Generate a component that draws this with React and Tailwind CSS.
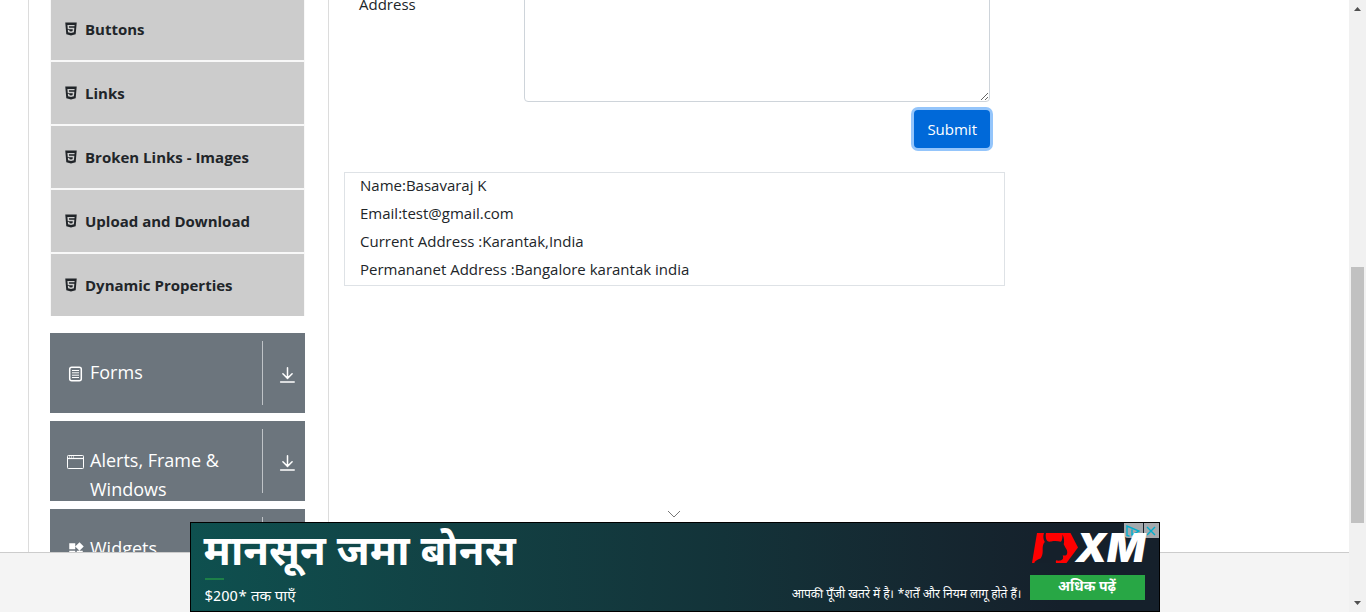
import { AiFillHtml5 } from "react-icons/ai";
import { MdWidgets } from "react-icons/md";

const links = [
  "Buttons",
  "Links",
  "Broken Links - Images",
  "Upload and Download",
  "Dynamic Properties",
];

const results = [
  "Name:Basavaraj K",
  "Email:test@gmail.com",
  "Current Address :Karantak,India",
  "Permananet Address :Bangalore karantak india",
];

function FormsIcon() {
  return (
    <svg viewBox="0 0 18 18" className="size-[18px]" fill="none" stroke="currentColor" aria-hidden="true">
      <rect x="2.700" y="2.200" width="11.600" height="13.600" rx="2" strokeWidth="1.5" />
      <path d="M5 5.500h7M5 7.800h7M5 10.200h7M5 12.500h7" strokeWidth="1" />
    </svg>
  );
}

function WindowIcon() {
  return (
    <svg viewBox="0 0 18 18" className="size-[18px]" fill="none" stroke="currentColor" aria-hidden="true">
      <rect x="0.500" y="2.500" width="16" height="13" rx="0.800" strokeWidth="1" />
      <path d="M.5 5.500h16" strokeWidth="1.2" />
      <path d="M2 4h1M4 4h1M6 4h1" strokeWidth="1" />
    </svg>
  );
}

function DownloadIcon() {
  return (
    <svg viewBox="0 0 16 16" className="size-4" fill="none" stroke="currentColor" strokeWidth="1.5" strokeLinecap="round" aria-hidden="true">
      <path d="M8.500.8v10.600M3.900 6.800l4.600 4.600 4.600-4.600M1.600 15h13.600" />
    </svg>
  );
}

const groups = [
  { name: "Forms", Icon: FormsIcon },
  { name: "Alerts, Frame & Windows", Icon: WindowIcon },
  { name: "Widgets", Icon: MdWidgets },
];

function Sidebar() {
  return (
    <nav className="w-[301px] shrink-0 border-x border-[#dcdcdc] pl-[21px] pr-[23px]">
      <ul className="-mt-0.5 flex flex-col gap-0.5 border-x border-[#f8f8f8] bg-[#f8f8f8]">
        {links.map((name) => (
          <li key={name}>
            <a href="#" className="flex h-[62px] items-center gap-1.5 bg-[#ccc] pl-3 text-[15px] font-bold text-[#212529]">
              <AiFillHtml5 className="size-4" />
              {name}
            </a>
          </li>
        ))}
      </ul>
      <div className="mt-[17px] flex flex-col gap-2">
        {groups.map(({ name, Icon }) => (
          <button key={name} type="button" className="flex h-20 items-start overflow-hidden bg-[#6c757d] text-left text-lg leading-[29px] text-white">
            <span className="flex flex-1 gap-[5px] px-[17px] pt-[25px]">
              <span className="flex h-8 w-[18px] shrink-0 items-center">
                <Icon className="size-[18px]" />
              </span>
              <span className="min-w-0">{name}</span>
            </span>
            <span className="mt-2 flex h-16 w-[43px] items-center justify-center border-l border-[#bfc3c7] pl-1.5 pt-1">
              <DownloadIcon />
            </span>
          </button>
        ))}
      </div>
    </nav>
  );
}

function TextBoxForm() {
  return (
    <main className="w-full max-w-[691px] px-[15px] text-[15px] leading-6">
      <form className="px-[15px]" onSubmit={(e) => e.preventDefault()}>
        <div className="-mt-2 flex">
          <label htmlFor="permanentAddress" className="w-[165px] shrink-0">
            Address
          </label>
          <textarea
            id="permanentAddress"
            className="h-[110px] min-w-0 flex-1 resize rounded border border-[#ced4da] bg-white px-3 py-1.5 outline-none"
          />
        </div>
        <div className="mt-2 flex justify-end">
          <button
            type="submit"
            className="h-[38px] rounded bg-[#0069d9] px-[13px] text-white ring-3 ring-[#94c5fb]"
          >
            Submit
          </button>
        </div>
      </form>
      <div className="mt-6 border border-[#dee2e6] px-[15px]">
        {results.map((line) => (
          <p key={line} className="mb-1">
            {line}
          </p>
        ))}
      </div>
    </main>
  );
}

function XmLogo() {
  return (
    <div className="flex items-center pl-0.5 text-white">
      <svg viewBox="0 0 46 30" className="h-[30px] w-[46px] shrink-0" aria-hidden="true">
        <path fill="#f00" d="M5 0h33.500L46 14.500 34.500 30H0Z" />
        <path
          fill="#15202b"
          d="M12 0C11 3 11 6 12.800 9c-1.800 2-2.300 4.500-2.100 8 .1 4-.7 6.500-2.200 8.500-2 .8-4 1.500-6 3.500v1.500h22c-.8-1-1-2.300-.2-3.300 1.700.8 4.500.6 6-.7 1-1 1-2.500.4-4.200 2 .6 3.800.2 4.300-1.300.6-2 .2-4-1.500-6.200l-1.800-3.500c.7-3 .5-7-1.300-9.800.2 3.300-.2 5.800-1.500 7.300-3.300-.8-6.500-1-9.700-.3-2.700.5-4.500-.3-5.100-2.700-.5-2-.5-4-.1-5.800Z"
        />
      </svg>
      <span className="-ml-0.5 font-['Inter',sans-serif] text-[40px] font-black italic leading-[30px]">XM</span>
    </div>
  );
}

function AdBanner() {
  return (
    <aside className="absolute bottom-0 left-1/2 w-[970px] -translate-x-1/2">
      <button type="button" aria-label="Collapse" className="mx-auto flex h-4 w-8 items-center justify-center pr-0.5 text-[#777]">
        <svg viewBox="0 0 14 8" className="h-2 w-3.5" fill="none" stroke="currentColor" aria-hidden="true">
          <path d="m1 1 6 6 6-6" />
        </svg>
      </button>
      <div className="relative flex h-[90px] justify-between border border-black bg-linear-to-r from-[#0e504f] via-[#133339] via-55% to-[#15202b] to-90% pl-[13px] pr-3.5 font-['Noto_Sans_Devanagari','Noto_Sans',sans-serif] text-white">
        <div className="absolute right-0 top-0 flex gap-px">
          <span className="flex h-[15px] w-[19px] items-center justify-center rounded-bl bg-[#a5a9ad]">
            <svg viewBox="0 0 14 12" className="h-3 w-3.5" fill="none" stroke="#00aecd" strokeWidth="1.4" aria-hidden="true">
              <path d="M3.500 11.200 1 10.500V1l12 5-7 3.800V4.500" />
            </svg>
          </span>
          <button type="button" aria-label="Close ad" className="flex h-[15px] w-[15px] items-center justify-center bg-[#a5a9ad]">
            <svg viewBox="0 0 10 10" className="size-2.5" stroke="#00aecd" strokeWidth="1.4" aria-hidden="true">
              <path d="m1 1 8 8M9 1 1 9" />
            </svg>
          </button>
        </div>
        <div>
          <p className="h-[55px] pt-2 text-[42px] font-bold leading-[48px]">मानसून जमा बोनस</p>
          <div className="ml-px h-0.5 w-[19px] bg-[#1d8048]" />
          <p className="pl-px pt-1 text-[15px] leading-7">$200* तक पाएँ</p>
        </div>
        <div className="relative flex items-end gap-2">
          <p className="pb-1 text-xs leading-6">आपकी पूँजी खतरे में है। *शर्तें और नियम लागू होते हैं।</p>
          <div className="flex w-[115px] flex-col gap-3 pb-[11px]">
            <XmLogo />
            <a href="#" className="flex h-[25px] items-center justify-center bg-[#28a745] text-sm font-bold">
              अधिक पढ़ें
            </a>
          </div>
        </div>
      </div>
    </aside>
  );
}

function ScrollTrack() {
  return (
    <div className="flex w-[17px] shrink-0 flex-col items-center justify-between bg-[#f1f1f1] py-[7px]" aria-hidden="true">
      <svg viewBox="0 0 7 4" className="h-1 w-[7px]" fill="#505050">
        <path d="M0 4 3.500 0 7 4Z" />
      </svg>
      <div className="flex w-[13px] flex-1 flex-col">
        <div className="grow-[256]" />
        <div className="grow-[256] bg-[#c1c1c1]" />
        <div className="grow-[78]" />
      </div>
      <svg viewBox="0 0 7 4" className="h-1 w-[7px]" fill="#505050">
        <path d="m0 0 3.500 4L7 0Z" />
      </svg>
    </div>
  );
}

export default function App() {
  return (
    <div className="flex h-screen overflow-hidden bg-white font-['Segoe_UI','Open_Sans',sans-serif] text-base text-[#212529]">
      <div className="relative flex min-w-0 flex-1 flex-col">
        <div className="flex min-h-0 flex-1 overflow-hidden pl-7">
          <Sidebar />
          <TextBoxForm />
        </div>
        <footer className="h-15 shrink-0 border-t border-[#ccc] bg-[#f4f4f4]" />
        <AdBanner />
      </div>
      <ScrollTrack />
    </div>
  );
}
